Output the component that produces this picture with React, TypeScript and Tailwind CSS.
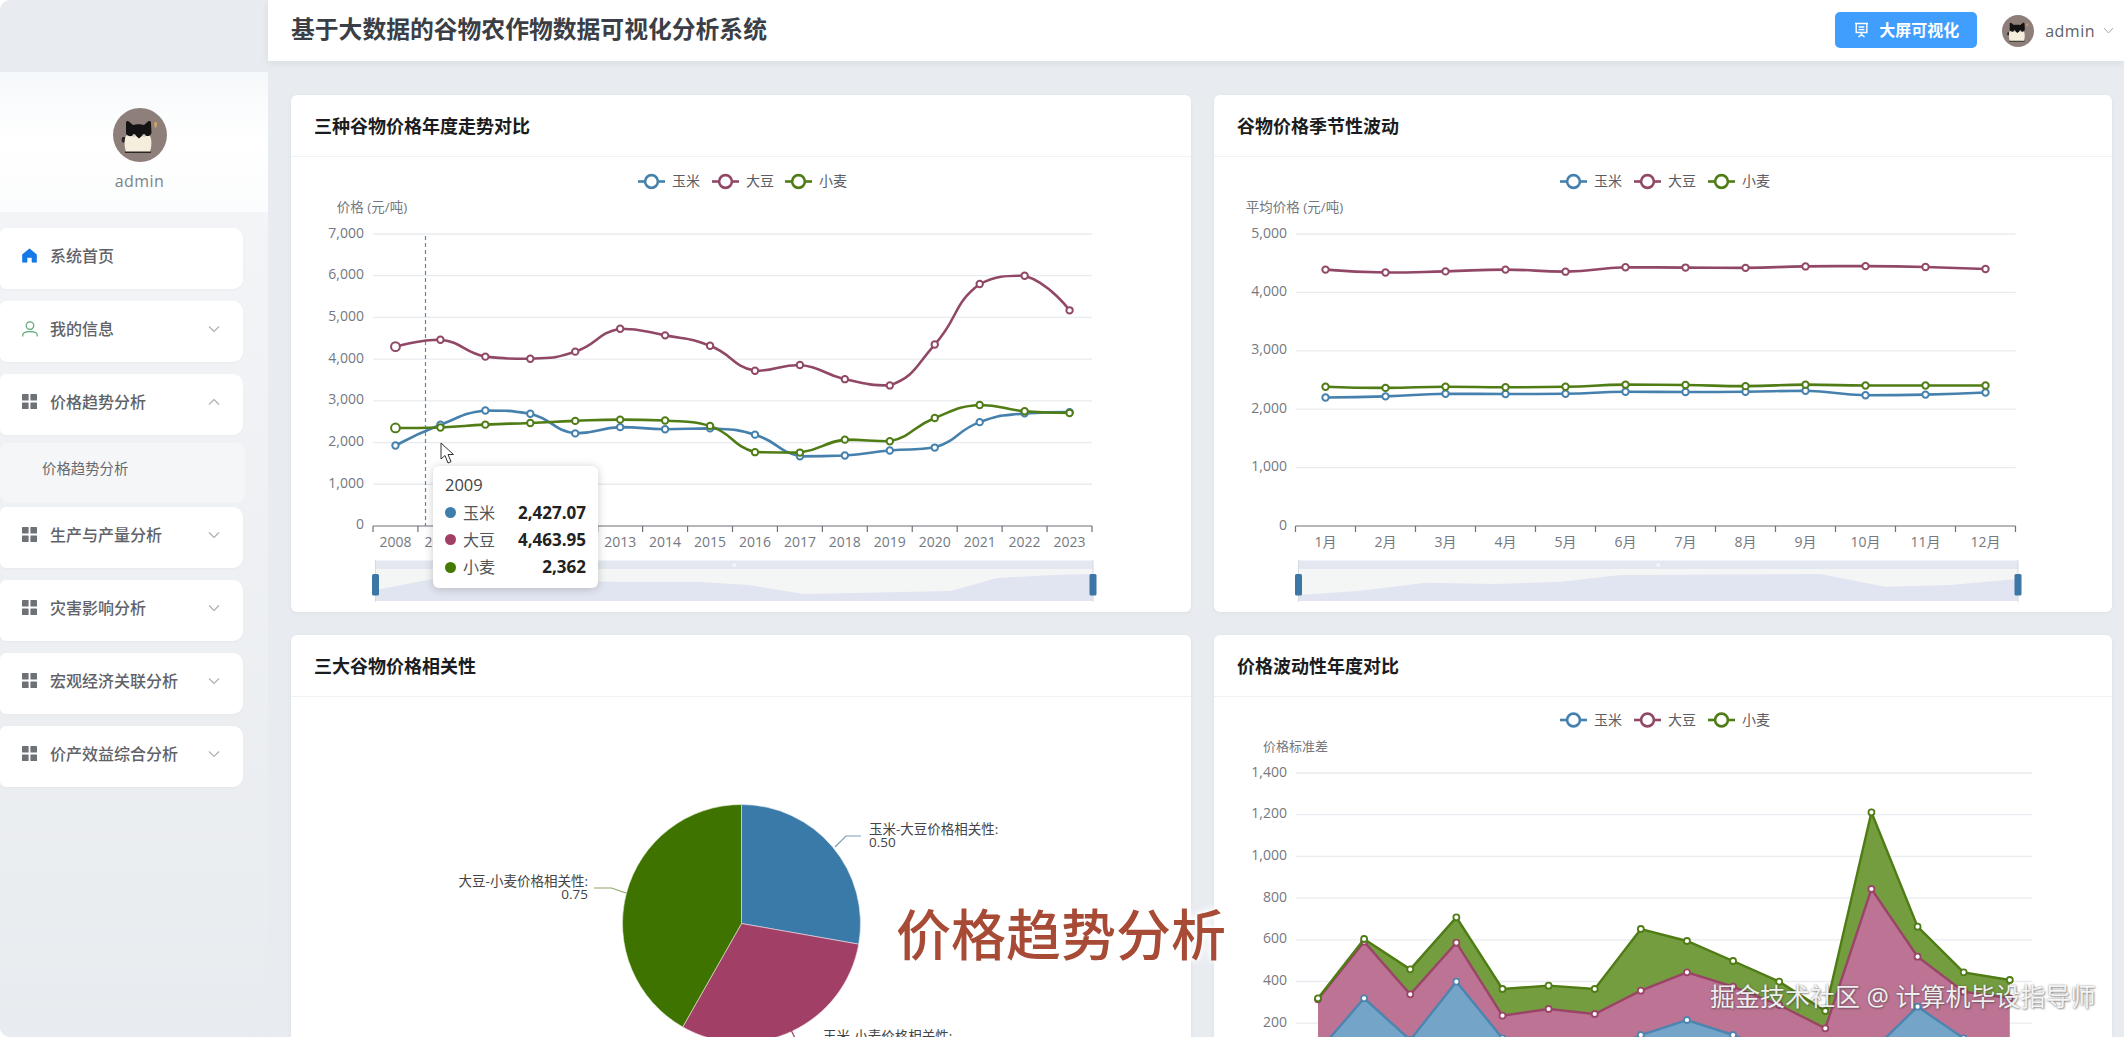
import React from "react";

const BLUE = "#4581ac";
const RED = "#914867";
const GREEN = "#4f7c14";
const TICK = "#74787f";
const GRID = "#e8ebf0";

type Pt = [number, number];

function smoothPath(pts: Pt[], smooth = 0.5) {
  let d = `M${pts[0][0]} ${pts[0][1]}`;
  let cp0: Pt = pts[0];
  for (let i = 0; i < pts.length - 1; i++) {
    const cur = pts[i + 1];
    const next = pts[i + 2];
    let cp1: Pt = cur;
    let nextCp: Pt = cur;
    if (next) {
      const prev = pts[i];
      const dx = next[0] - prev[0];
      const dy = next[1] - prev[1];
      const lenPrev = Math.hypot(cur[0] - prev[0], cur[1] - prev[1]);
      const lenNext = Math.hypot(next[0] - cur[0], next[1] - cur[1]);
      const r = lenNext / (lenNext + lenPrev);
      let ny = cur[1] + dy * smooth * r;
      let py = cur[1] - dy * smooth * (1 - r);
      ny = Math.min(ny, Math.max(next[1], cur[1]));
      ny = Math.max(ny, Math.min(next[1], cur[1]));
      py = Math.min(py, Math.max(prev[1], cur[1]));
      py = Math.max(py, Math.min(prev[1], cur[1]));
      const nx = cur[0] + dx * smooth * r;
      const px = cur[0] - dx * smooth * (1 - r);
      nextCp = [nx, ny];
      cp1 = [px, py];
    }
    d += `C${cp0[0]} ${cp0[1]} ${cp1[0]} ${cp1[1]} ${cur[0]} ${cur[1]}`;
    cp0 = nextCp;
  }
  return d;
}

function straight(pts: Pt[]) {
  return pts.map((p, i) => `${i ? "L" : "M"}${p[0]} ${p[1]}`).join("");
}

function Legend({ xs, y }: { xs: number[]; y: number }) {
  const items = [
    { t: "玉米", c: BLUE },
    { t: "大豆", c: RED },
    { t: "小麦", c: GREEN },
  ];
  return (
    <g>
      {items.map((it, i) => (
        <g key={it.t}>
          <line x1={xs[i]} x2={xs[i] + 27} y1={y} y2={y} stroke={it.c} strokeWidth={2.6} />
          <circle cx={xs[i] + 13.5} cy={y} r={6.4} fill="#fff" stroke={it.c} strokeWidth={2.6} />
          <text x={xs[i] + 34} y={y - 1} dominantBaseline="central" fontSize={14} fill="#5a5d63">
            {it.t}
          </text>
        </g>
      ))}
    </g>
  );
}

function Series({ pts, color, big }: { pts: Pt[]; color: string; big?: boolean }) {
  return (
    <g>
      <path d={smoothPath(pts)} fill="none" stroke={color} strokeWidth={2.6} />
      {pts.map((p, i) => (
        <circle
          key={i}
          cx={p[0]}
          cy={p[1]}
          r={big && i === 0 ? 4.4 : 3.2}
          fill="#fff"
          stroke={color}
          strokeWidth={2}
        />
      ))}
    </g>
  );
}

function YAxis({ labels, x0, x1, top, step, endX }: { labels: string[]; x0: number; x1: number; top: number; step: number; endX: number }) {
  return (
    <g>
      {labels.map((l, i) => (
        <g key={l}>
          {l !== "0" && <line x1={x0} x2={x1} y1={top + i * step} y2={top + i * step} stroke={GRID} strokeWidth={1.3} />}
          <text x={endX} y={top + i * step - 2} textAnchor="end" dominantBaseline="central" fontSize={14} fill={TICK}>
            {l}
          </text>
        </g>
      ))}
    </g>
  );
}

function XAxis({ labels, x0, x1, y }: { labels: string[]; x0: number; x1: number; y: number }) {
  const w = (x1 - x0) / labels.length;
  return (
    <g>
      <line x1={x0} x2={x1} y1={y} y2={y} stroke="#6e7079" strokeWidth={1.2} />
      {Array.from({ length: labels.length + 1 }).map((_, i) => (
        <line key={i} x1={x0 + i * w} x2={x0 + i * w} y1={y} y2={y + 6} stroke="#6e7079" strokeWidth={1.2} />
      ))}
      {labels.map((l, i) => (
        <text key={l} x={x0 + (i + 0.5) * w} y={y + 15} textAnchor="middle" dominantBaseline="central" fontSize={14} fill={TICK}>
          {l}
        </text>
      ))}
    </g>
  );
}

function DataZoom({ x0, x1, area }: { x0: number; x1: number; area: Pt[] }) {
  return (
    <g>
      <rect x={x0} y={569} width={x1 - x0} height={32} fill="#f4f5f5" />
      <path d={`${straight(area)}L${x1} 601L${x0} 601Z`} fill="#e1e5f1" />
      <rect x={x0} y={560.5} width={x1 - x0} height={8.5} fill="#e3e7ef" />
      <circle cx={(x0 + x1) / 2} cy={565} r={2} fill="#f3f5f9" />
      {[x0, x1].map((x) => (
        <g key={x}>
          <line x1={x} x2={x} y1={560} y2={602} stroke="#d5dae3" strokeWidth={1} />
          <rect x={x - 3.5} y={574} width={7} height={21.5} rx={1.5} fill="#3c76a4" />
        </g>
      ))}
    </g>
  );
}

const yearLabels = Array.from({ length: 16 }, (_, i) => String(2008 + i));
const corn = [1930, 2427, 2770, 2690, 2220, 2370, 2320, 2340, 2190, 1670, 1690, 1810, 1880, 2490, 2700, 2730];
const soy = [4300, 4464, 4060, 4010, 4180, 4730, 4570, 4320, 3720, 3860, 3520, 3370, 4350, 5800, 6000, 5170];
const wheat = [2350, 2362, 2430, 2470, 2520, 2550, 2530, 2400, 1770, 1760, 2070, 2030, 2590, 2900, 2750, 2710];

function PriceChart() {
  const map = (arr: number[]): Pt[] => arr.map((v, i) => [373 + (i + 0.5) * 44.94, 526 - (v / 7000) * 292]);
  return (
    <svg viewBox="291 157 900 455" width={900} height={455} className="block">
      <Legend xs={[638, 712, 785]} y={181.5} />
      <text x={372} y={207} textAnchor="middle" dominantBaseline="central" fontSize={13.5} fill={TICK}>
        价格 (元/吨)
      </text>
      <YAxis labels={["7,000", "6,000", "5,000", "4,000", "3,000", "2,000", "1,000", "0"]} x0={373} x1={1092} top={234} step={41.71} endX={364} />
      <XAxis labels={yearLabels} x0={373} x1={1092} y={526} />
      <line x1={425.5} x2={425.5} y1={236} y2={526} stroke="#5f8a94" strokeWidth={1.2} strokeDasharray="4 3" />
      <Series pts={map(corn)} color={BLUE} />
      <Series pts={map(soy)} color={RED} big />
      <Series pts={map(wheat)} color={GREEN} big />
      <DataZoom
        x0={375.5}
        x1={1093}
        area={[
          [375.5, 590],
          [433, 579],
          [460, 578],
          [623, 582],
          [700, 582],
          [749, 585],
          [804, 594],
          [951, 591],
          [997, 578],
          [1052, 575],
          [1093, 574],
        ]}
      />
    </svg>
  );
}

const seasonSoy = [4390, 4340, 4360, 4390, 4355, 4430, 4425, 4420, 4445, 4450, 4435, 4400];
const seasonWheat = [2385, 2365, 2385, 2375, 2385, 2420, 2415, 2395, 2420, 2405, 2405, 2405];
const seasonCorn = [2200, 2220, 2265, 2260, 2265, 2300, 2295, 2300, 2315, 2240, 2250, 2285];

function SeasonChart() {
  const map = (arr: number[]): Pt[] => arr.map((v, i) => [1295.5 + (i + 0.5) * 60, 526 - (v / 5000) * 292]);
  return (
    <svg viewBox="1214 157 898 455" width={898} height={455} className="block">
      <Legend xs={[1560, 1634, 1708]} y={181.5} />
      <text x={1294.5} y={207} textAnchor="middle" dominantBaseline="central" fontSize={13.5} fill={TICK}>
        平均价格 (元/吨)
      </text>
      <YAxis labels={["5,000", "4,000", "3,000", "2,000", "1,000", "0"]} x0={1295.5} x1={2015.5} top={234} step={58.4} endX={1287} />
      <XAxis labels={["1月", "2月", "3月", "4月", "5月", "6月", "7月", "8月", "9月", "10月", "11月", "12月"]} x0={1295.5} x1={2015.5} y={526} />
      <Series pts={map(seasonCorn)} color={BLUE} />
      <Series pts={map(seasonSoy)} color={RED} />
      <Series pts={map(seasonWheat)} color={GREEN} />
      <DataZoom
        x0={1298.5}
        x1={2018}
        area={[
          [1298.5, 595],
          [1358, 591],
          [1426, 582.7],
          [1494, 584],
          [1561, 581.7],
          [1620.5, 575],
          [1820.6, 574],
          [1885, 586.7],
          [1950, 585],
          [2018, 579],
        ]}
      />
    </svg>
  );
}

function polar(cx: number, cy: number, r: number, deg: number): Pt {
  const a = (deg * Math.PI) / 180;
  return [cx + r * Math.sin(a), cy - r * Math.cos(a)];
}

function slice(cx: number, cy: number, r: number, a0: number, a1: number) {
  const p0 = polar(cx, cy, r, a0);
  const p1 = polar(cx, cy, r, a1);
  return `M${cx} ${cy}L${p0[0]} ${p0[1]}A${r} ${r} 0 ${a1 - a0 > 180 ? 1 : 0} 1 ${p1[0]} ${p1[1]}Z`;
}

function PieChart() {
  const cx = 741.5;
  const cy = 923.5;
  const r = 119;
  return (
    <svg viewBox="291 697 900 455" width={900} height={455} className="block">
      <path d={slice(cx, cy, r, 0, 100)} fill="#3a7aa8" stroke="#e4edf3" strokeWidth={0.6} />
      <path d={slice(cx, cy, r, 100, 209.6)} fill="#a13f67" stroke="#f0dfe6" strokeWidth={0.6} />
      <path d={slice(cx, cy, r, 209.6, 360)} fill="#3f7300" stroke="#e6f0d8" strokeWidth={0.6} />
      <path d="M835 847L846 836L861 836" fill="none" stroke="#7f9cb1" strokeWidth={1.2} />
      <path d="M594 888L611.5 888L626 893" fill="none" stroke="#8ea46a" strokeWidth={1.2} />
      <path d="M790 1028L796 1040" fill="none" stroke="#a13f67" strokeWidth={1.2} />
      <text x={869} y={829} dominantBaseline="central" fontSize={13.5} fill="#444">
        玉米-大豆价格相关性:
      </text>
      <text x={869} y={841.5} dominantBaseline="central" fontSize={13.5} fill="#444">
        0.50
      </text>
      <text x={588} y={881} textAnchor="end" dominantBaseline="central" fontSize={13.5} fill="#444">
        大豆-小麦价格相关性:
      </text>
      <text x={588} y={893.5} textAnchor="end" dominantBaseline="central" fontSize={13.5} fill="#444">
        0.75
      </text>
      <text x={823} y={1036} dominantBaseline="central" fontSize={13.5} fill="#444">
        玉米-小麦价格相关性:
      </text>
    </svg>
  );
}

const zCorn = [1235, 1075, 1200, 1025, 1195, 1250, 1250, 1185, 1140, 1185, 1240, 1260, 1235, 1100, 1195, 1260];
const zSoy = [1078, 905, 1063, 908, 1127, 1107, 1122, 1052, 997, 1040, 1095, 1165, 747, 950, 1055, 1075];
const zWheat = [1075, 897, 988, 832, 1047, 1037, 1047, 867, 903, 963, 1025, 1113, 517, 860, 997, 1020];

function AreaChart() {
  const toPts = (a: number[]): Pt[] => a.map((v, i) => [1318 + i * 46.12, 640 + v / 3]);
  const c = toPts(zCorn);
  const s = toPts(zSoy);
  const w = toPts(zWheat);
  const band = (top: Pt[], bot: Pt[]) => `${straight(top)}L${[...bot].reverse().map((p) => `${p[0]} ${p[1]}`).join("L")}Z`;
  const base: Pt[] = c.map((p) => [p[0], 1065]);
  const line = (pts: Pt[], color: string) => (
    <g>
      <path d={straight(pts)} fill="none" stroke={color} strokeWidth={2.4} />
      {pts.map((p, i) => (
        <circle key={i} cx={p[0]} cy={p[1]} r={3} fill="#fff" stroke={color} strokeWidth={1.8} />
      ))}
    </g>
  );
  return (
    <svg viewBox="1214 697 898 455" width={898} height={455} className="block">
      <Legend xs={[1560, 1634, 1708]} y={720} />
      <text x={1295.5} y={746} textAnchor="middle" dominantBaseline="central" fontSize={13} fill={TICK}>
        价格标准差
      </text>
      <YAxis labels={["1,400", "1,200", "1,000", "800", "600", "400", "200"]} x0={1295.5} x1={2032} top={773} step={41.7} endX={1287} />
      <path d={band(c, base)} fill="#74a5c8" />
      <path d={band(s, c)} fill="#bd7394" />
      <path d={band(w, s)} fill="#749d40" />
      {line(c, "#4c85b0")}
      {line(s, "#9a4468")}
      {line(w, GREEN)}
    </svg>
  );
}

function Card({ title, children, extra }: { title: string; children: React.ReactNode; extra?: React.ReactNode }) {
  return (
    <section className="relative rounded-md bg-white shadow-[0_1px_4px_rgba(0,0,0,0.05)]">
      <div className="flex h-[62px] items-center border-b border-[#f0f2f5] px-[23px] pt-[2px] text-[18px] font-bold text-[#1a1c20]">
        {title}
      </div>
      {children}
      {extra}
    </section>
  );
}

function Tooltip() {
  const rows = [
    { n: "玉米", v: "2,427.07", c: "#3f7dab" },
    { n: "大豆", v: "4,463.95", c: "#a13f67" },
    { n: "小麦", v: "2,362", c: "#437a00" },
  ];
  return (
    <div className="absolute left-[142px] top-[371px] h-[122px] w-[165px] rounded-md bg-white px-3 pt-[5px] text-[16px] text-[#444] shadow-[0_1px_10px_rgba(0,0,0,0.2)]">
      <div className="h-[28px] text-[16.5px] leading-[28px]">2009</div>
      {rows.map((r) => (
        <div key={r.n} className="flex h-[27.3px] items-center">
          <span className="mr-[7px] h-[11px] w-[11px] rounded-full" style={{ background: r.c }} />
          <span className="flex-1 text-[#555]">{r.n}</span>
          <span className="text-[17px] font-bold text-[#222]">{r.v}</span>
        </div>
      ))}
    </div>
  );
}

function Cursor() {
  return (
    <svg className="absolute left-[149px] top-[347px]" width="15" height="23" viewBox="0 0 15 23">
      <path d="M1 1L1 17L5 13.5L8 21L11 19.7L8 12.5L13.5 12.5Z" fill="#fff" stroke="#333" strokeWidth="1" strokeLinejoin="round" />
    </svg>
  );
}

function CatAvatar({ size }: { size: number }) {
  return (
    <svg width={size} height={size} viewBox="0 0 54 54" className="block shrink-0">
      <circle cx="27" cy="27" r="27" fill="#8f7f7b" />
      <path d="M9.5 29C8 31 8.5 34 10.5 35L13 33V29Z" fill="#2a2624" />
      <path d="M12 31C12 27 16 25 25 25C34 25 38 27 38 31C39 35 38 41 37 44H13C12 41 11 35 12 31Z" fill="#f5eedd" />
      <path d="M13 14.5C13.5 12.5 15 12.5 16.5 14L20 17C23 16 28 16 31 17L35 13.5C36.5 12.5 38 13 38 15L38.5 25C37 29 33 28.5 30 27L26 30.5L22 27C19 28.5 14.5 29 13 25.5Z" fill="#141212" />
      <path d="M12 43.5H38V45H12Z" fill="#2b2622" />
      <circle cx="21" cy="27.5" r="1.6" fill="#cfc9bd" />
      <circle cx="31" cy="27.5" r="1.6" fill="#cfc9bd" />
      <path d="M41 15L44 14L43.5 19L42 20Z" fill="#d6ab5b" />
    </svg>
  );
}

function GridIcon() {
  return (
    <svg width="15" height="15" viewBox="0 0 15 15" className="shrink-0">
      <rect x="0" y="0" width="6.6" height="6.6" rx="0.6" fill="#6e7277" />
      <rect x="8.4" y="0" width="6.6" height="6.6" rx="0.6" fill="#6e7277" />
      <rect x="0" y="8.4" width="6.6" height="6.6" rx="0.6" fill="#6e7277" />
      <rect x="8.4" y="8.4" width="6.6" height="6.6" rx="0.6" fill="#6e7277" />
    </svg>
  );
}

function HomeIcon() {
  return (
    <svg width="15" height="15" viewBox="0 0 15 15" className="shrink-0">
      <path d="M7.5 0.8L14.6 6.6V14.2H10V9.6H5V14.2H0.4V6.6Z" fill="#1677e6" stroke="#1677e6" strokeWidth="0.6" strokeLinejoin="round" />
    </svg>
  );
}

function UserIcon() {
  return (
    <svg width="16" height="16" viewBox="0 0 16 16" fill="none" stroke="#5aa877" strokeWidth="1.2" className="shrink-0">
      <circle cx="8" cy="4.6" r="3.8" />
      <path d="M0.8 15.4V14C0.8 11.6 3 10.6 8 10.6C13 10.6 15.2 11.6 15.2 14V15.4" />
    </svg>
  );
}

function Chevron({ up }: { up?: boolean }) {
  return (
    <svg width="12" height="8" viewBox="0 0 12 8" fill="none" stroke="#a9adb2" strokeWidth="1.1" className="shrink-0">
      <path d={up ? "M1 6.5L6 1.5L11 6.5" : "M1 1.5L6 6.5L11 1.5"} />
    </svg>
  );
}

function NavItem({ icon, text, chevron }: { icon: React.ReactNode; text: string; chevron?: "up" | "down" }) {
  return (
    <div className="mb-3 flex h-[61px] w-[243px] items-center rounded-r-[10px] rounded-l-[6px] bg-white pb-[6px] pl-[22px] pr-[23px] shadow-[0_1px_3px_rgba(0,0,0,0.03)]">
      <span className="flex w-[28px] shrink-0 items-center">{icon}</span>
      <span className="flex-1 text-[16px] font-medium text-[#5f6369]">{text}</span>
      {chevron && <Chevron up={chevron === "up"} />}
    </div>
  );
}

function Sidebar() {
  return (
    <aside className="flex w-[268px] shrink-0 flex-col pt-[72px]">
      <div className="flex-1 bg-gradient-to-b from-[#f4f6f8] to-[#e8ebef]">
        <div className="flex h-[140px] flex-col items-center bg-gradient-to-b from-[#f5f8fa] via-white to-[#fbfcfd] pl-[11px] pt-[36px]">
          <CatAvatar size={54} />
          <div className="mt-[7px] text-[16px] font-medium leading-[24px] tracking-[0.4px] text-[#7d8389]">admin</div>
        </div>
        <nav className="pt-4">
          <NavItem icon={<HomeIcon />} text="系统首页" />
          <NavItem icon={<UserIcon />} text="我的信息" chevron="down" />
          <NavItem icon={<GridIcon />} text="价格趋势分析" chevron="up" />
          <div className="-mt-1 mb-[5px] flex h-[59px] w-[245px] items-center rounded-lg bg-[#f4f6f8] pb-2 pl-[42px] text-[14.4px] text-[#66696e]">
            价格趋势分析
          </div>
          <NavItem icon={<GridIcon />} text="生产与产量分析" chevron="down" />
          <NavItem icon={<GridIcon />} text="灾害影响分析" chevron="down" />
          <NavItem icon={<GridIcon />} text="宏观经济关联分析" chevron="down" />
          <NavItem icon={<GridIcon />} text="价产效益综合分析" chevron="down" />
        </nav>
      </div>
    </aside>
  );
}

function Header() {
  return (
    <header className="flex h-[61px] shrink-0 items-center bg-white pl-[23px] pr-[10px] shadow-[0_2px_8px_rgba(0,0,0,0.07)]">
      <h1 className="flex-1 pb-[2px] text-[23.8px] font-bold text-[#3b3f45]">基于大数据的谷物农作物数据可视化分析系统</h1>
      <button className="mb-[2px] flex h-[36px] w-[142px] items-center rounded-[5px] bg-[#409eff] pl-[19px] text-[16px] font-bold text-white">
        <svg width="15" height="16" viewBox="0 0 15 16" fill="none" stroke="#fff" strokeWidth="1.4" className="mr-[10px]">
          <path d="M1 1.5H14M2.2 1.5V10.5H12.8V1.5M4.6 5H10.4M4.6 7.6H10.4M7.5 10.5V13M4.5 15L7.5 12.6L10.5 15" />
        </svg>
        大屏可视化
      </button>
      <div className="ml-[25px] flex items-center">
        <CatAvatar size={32} />
        <span className="ml-[11px] text-[16px] font-medium tracking-[0.5px] text-[#5d6167]">admin</span>
        <svg width="11" height="7" viewBox="0 0 11 7" fill="none" stroke="#a9adb2" strokeWidth="1" className="ml-[8px]">
          <path d="M1 1L5.5 6L10 1" />
        </svg>
      </div>
    </header>
  );
}

export default function App() {
  return (
    <div className="relative flex h-screen w-full overflow-hidden rounded-l-[10px] bg-[#e8ecf1] font-['Open_Sans','Noto_Sans_CJK_SC',sans-serif]">
      <Sidebar />
      <div className="flex min-w-0 flex-1 flex-col">
        <Header />
        <main className="flex-1 overflow-hidden pl-[23px] pr-[12px] pt-[34px]">
          <div className="grid grid-cols-[900px_898px] auto-rows-[517px] gap-x-[23px] gap-y-[23px]">
            <Card title="三种谷物价格年度走势对比" extra={<><Cursor /><Tooltip /></>}>
              <PriceChart />
            </Card>
            <Card title="谷物价格季节性波动">
              <SeasonChart />
            </Card>
            <Card title="三大谷物价格相关性">
              <PieChart />
            </Card>
            <Card title="价格波动性年度对比">
              <AreaChart />
            </Card>
          </div>
        </main>
      </div>
      <div className="absolute left-[896px] top-[894px] whitespace-nowrap text-[55px] font-medium leading-[80px] text-[#a84b36] [text-shadow:0_0_4px_#fff,0_0_8px_#fff,0_0_8px_#fff]">
        价格趋势分析
      </div>
      <div className="absolute left-[1710px] top-[978px] whitespace-nowrap text-[25px] leading-[36px] text-white/90 [text-shadow:0_0_2px_rgba(60,60,60,0.6),1px_1px_2px_rgba(60,60,60,0.45)]">
        掘金技术社区 @ 计算机毕设指导师
      </div>
    </div>
  );
}
